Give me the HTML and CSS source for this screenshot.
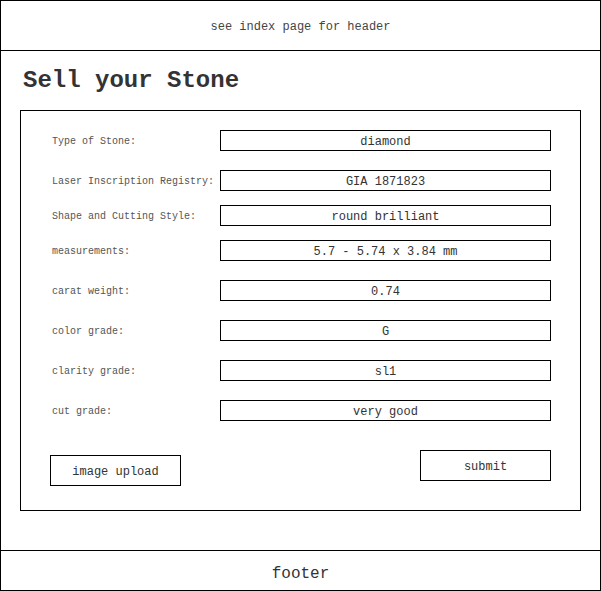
FILE: index.html
```html
<!DOCTYPE html>
<html lang="en">
<head>
<meta charset="utf-8">
<title>Sell your Stone</title>
<link rel="stylesheet" href="styles.css">
</head>
<body>
<div class="page">
  <header class="site-header">see index page for header</header>
  <main class="main">
    <h1 class="title">Sell your Stone</h1>
    <form class="sell-form">
      <div class="row">
        <label class="label">Type of Stone:</label>
        <div class="field">diamond</div>
      </div>
      <div class="row">
        <label class="label">Laser Inscription Registry:</label>
        <div class="field">GIA 1871823</div>
      </div>
      <div class="row row-tight">
        <label class="label">Shape and Cutting Style:</label>
        <div class="field">round brilliant</div>
      </div>
      <div class="row row-tight">
        <label class="label">measurements:</label>
        <div class="field">5.7 - 5.74 x 3.84 mm</div>
      </div>
      <div class="row">
        <label class="label">carat weight:</label>
        <div class="field">0.74</div>
      </div>
      <div class="row">
        <label class="label">color grade:</label>
        <div class="field">G</div>
      </div>
      <div class="row">
        <label class="label">clarity grade:</label>
        <div class="field">sl1</div>
      </div>
      <div class="row">
        <label class="label">cut grade:</label>
        <div class="field">very good</div>
      </div>
      <div class="actions">
        <div class="btn btn-upload">image upload</div>
        <div class="btn btn-submit">submit</div>
      </div>
    </form>
  </main>
  <footer class="site-footer">footer</footer>
</div>
</body>
</html>
```

FILE: styles.css
```css
* { box-sizing: border-box; }

html, body {
  margin: 0;
  padding: 0;
  background: #fff;
}

body {
  font-family: "Courier New", "Nimbus Mono PS", "Nimbus Mono L", FreeMono, Courier, "Liberation Mono", monospace;
  color: #333;
}

.page {
  width: 601px;
  height: 591px;
  border: 1px solid #000;
  display: flex;
  flex-direction: column;
}

.site-header {
  height: 50px;
  border-bottom: 1px solid #000;
  display: flex;
  align-items: center;
  justify-content: center;
  padding-top: 2px;
  font-size: 12px;
  color: #444;
}

.main {
  flex: 1;
  padding: 0 19px;
}

.title {
  margin: 0;
  padding: 16px 0 0 3px;
  height: 59px;
  font-size: 24px;
  line-height: 28px;
  font-weight: bold;
  color: #333;
}

.sell-form {
  border: 1px solid #000;
  padding: 19px 29px 24px 31px;
}

.row {
  display: grid;
  grid-template-columns: 168px 331px;
  align-items: center;
  margin-top: 19px;
}

.row:first-child { margin-top: 0; }
.row-tight { margin-top: 14px; }

.label {
  font-size: 10px;
  color: #555;
  white-space: nowrap;
  padding-top: 2px;
}

.field {
  height: 21px;
  border: 1px solid #000;
  display: flex;
  align-items: center;
  justify-content: center;
  padding-top: 2px;
  font-size: 12px;
  color: #333;
}

.actions {
  display: flex;
  justify-content: space-between;
  align-items: flex-start;
  margin-top: 29px;
  margin-left: -2px;
}

.btn {
  width: 131px;
  height: 31px;
  border: 1px solid #000;
  display: flex;
  align-items: center;
  justify-content: center;
  padding-top: 2px;
  font-size: 12px;
  color: #333;
}

.btn-upload { margin-top: 5px; }

.site-footer {
  height: 40px;
  border-top: 1px solid #000;
  display: flex;
  align-items: center;
  justify-content: center;
  padding-top: 6px;
  font-size: 16px;
  color: #333;
}
```
